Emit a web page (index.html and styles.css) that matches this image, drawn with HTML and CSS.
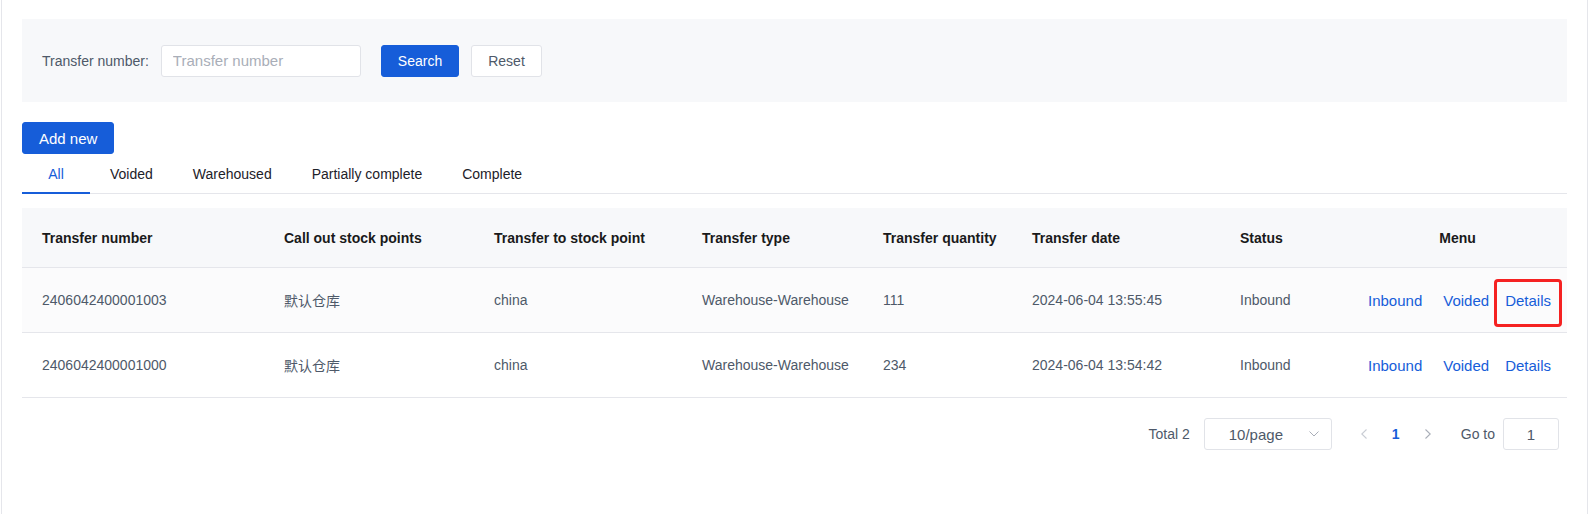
FILE: index.html
```html
<!DOCTYPE html>
<html lang="en">
<head>
<meta charset="utf-8">
<title>Transfers</title>
<link rel="stylesheet" href="styles.css">
</head>
<body>
<div class="page">
  <div class="filter">
    <label class="filter-label">Transfer number:</label>
    <input class="filter-input" type="text" placeholder="Transfer number">
    <button class="btn btn-primary btn-search">Search</button>
    <button class="btn btn-default">Reset</button>
  </div>

  <button class="btn btn-primary btn-add">Add new</button>

  <div class="tabs">
    <div class="tab tab-active">All</div>
    <div class="tab">Voided</div>
    <div class="tab">Warehoused</div>
    <div class="tab">Partially complete</div>
    <div class="tab">Complete</div>
  </div>

  <table class="grid">
    <colgroup>
      <col class="c1"><col class="c2"><col class="c3"><col class="c4"><col class="c5"><col class="c6"><col class="c7"><col class="c8">
    </colgroup>
    <thead>
      <tr>
        <th>Transfer number</th>
        <th>Call out stock points</th>
        <th>Transfer to stock point</th>
        <th>Transfer type</th>
        <th>Transfer quantity</th>
        <th>Transfer date</th>
        <th>Status</th>
        <th class="th-menu">Menu</th>
      </tr>
    </thead>
    <tbody>
      <tr class="row-hover">
        <td>2406042400001003</td>
        <td>默认仓库</td>
        <td>china</td>
        <td>Warehouse-Warehouse</td>
        <td>111</td>
        <td>2024-06-04 13:55:45</td>
        <td>Inbound</td>
        <td><div class="links"><a class="link link-in">Inbound</a><a class="link link-void">Voided</a><a class="link marked">Details</a></div></td>
      </tr>
      <tr>
        <td>2406042400001000</td>
        <td>默认仓库</td>
        <td>china</td>
        <td>Warehouse-Warehouse</td>
        <td>234</td>
        <td>2024-06-04 13:54:42</td>
        <td>Inbound</td>
        <td><div class="links"><a class="link link-in">Inbound</a><a class="link link-void">Voided</a><a class="link">Details</a></div></td>
      </tr>
    </tbody>
  </table>

  <div class="pager">
    <span class="pager-total">Total 2</span>
    <div class="pager-select">
      <span>10/page</span>
      <svg class="chev" width="10" height="6" viewBox="0 0 10 6"><polyline points="0.5,0.5 5,5 9.5,0.5" fill="none" stroke="#a9aeb8" stroke-width="1"/></svg>
    </div>
    <div class="pager-btns">
      <span class="pbtn pbtn-disabled"><svg width="6" height="10" viewBox="0 0 6 10"><polyline points="5.5,0.5 0.8,5 5.5,9.5" fill="none" stroke="#c9cdd4" stroke-width="1.1"/></svg></span>
      <span class="pbtn pbtn-current">1</span>
      <span class="pbtn"><svg width="6" height="10" viewBox="0 0 6 10"><polyline points="0.5,0.5 5.2,5 0.5,9.5" fill="none" stroke="#a9aeb8" stroke-width="1.1"/></svg></span>
    </div>
    <span class="pager-goto">Go to</span>
    <div class="pager-input">1</div>
  </div>
</div>
</body>
</html>
```

FILE: styles.css
```css
html, body {
  margin: 0;
  padding: 0;
  background: #ffffff;
}

body {
  font-family: "Liberation Sans", Arial, "Noto Sans CJK SC", sans-serif;
  font-size: 14px;
  color: #4e5969;
}

.page {
  margin: 0 1px;
  min-height: 514px;
  box-sizing: border-box;
  border-left: 1px solid #e5e6eb;
  border-right: 1px solid #e5e6eb;
  padding: 19px 20px 0;
}

/* Filter */
.filter {
  display: flex;
  align-items: center;
  height: 83px;
  box-sizing: border-box;
  padding: 0 20px;
  background: #f7f8fa;
}

.filter-label {
  font-size: 14px;
  color: #4e5969;
  margin-right: 12px;
}

.filter-input {
  width: 200px;
  height: 32px;
  box-sizing: border-box;
  border: 1px solid #e1e3e8;
  border-radius: 3px;
  background: #fff;
  padding: 0 11px;
  font-family: inherit;
  font-size: 15px;
  color: #1d2129;
  outline: none;
}

.filter-input::placeholder {
  color: #a9aeb8;
}

.btn {
  height: 32px;
  box-sizing: border-box;
  padding: 0 16px;
  border-radius: 3px;
  font-family: inherit;
  font-size: 14px;
  cursor: pointer;
}

.btn-primary {
  background: #165dd9;
  border: 1px solid #165dd9;
  color: #fff;
}

.btn-default {
  background: #fff;
  border: 1px solid #e1e3e8;
  color: #4e5969;
}

.btn-search {
  margin-left: 20px;
  margin-right: 12px;
}

.btn-add {
  display: block;
  margin-top: 20px;
  font-size: 15px;
  height: 32px;
  padding: 0 16px;
}

/* Tabs */
.tabs {
  display: flex;
  height: 39px;
  border-bottom: 1px solid #e5e6eb;
}

.tab {
  min-width: 68px;
  box-sizing: border-box;
  padding: 0 20px;
  display: flex;
  align-items: center;
  justify-content: center;
  font-size: 14px;
  color: #1d2129;
  position: relative;
}

.tab-active {
  color: #165dd9;
}

.tab-active::after {
  content: "";
  position: absolute;
  left: 0;
  right: 0;
  bottom: -1px;
  height: 2px;
  background: #165dd9;
}

/* Table */
.grid {
  width: 100%;
  margin-top: 14px;
  border-collapse: collapse;
  table-layout: fixed;
}

.c1 { width: 242px; }
.c2 { width: 210px; }
.c3 { width: 208px; }
.c4 { width: 181px; }
.c5 { width: 149px; }
.c6 { width: 208px; }
.c7 { width: 128px; }
.c8 { width: 219px; }

.grid th {
  height: 59px;
  padding: 0 20px;
  text-align: left;
  background: #f7f8fa;
  font-weight: bold;
  font-size: 14px;
  color: #1a1a1a;
  border-bottom: 1px solid #e5e6eb;
  white-space: nowrap;
}

.grid th.th-menu {
  text-align: center;
}

.grid td {
  height: 64px;
  padding: 0 20px;
  font-size: 14px;
  color: #4e5969;
  border-bottom: 1px solid #e5e6eb;
  white-space: nowrap;
}

.row-hover td {
  background: #fbfbfc;
}

.links {
  display: flex;
  align-items: center;
}

.link {
  font-size: 15px;
  color: #165dd9;
  cursor: pointer;
  text-decoration: none;
}

.link-in {
  margin-right: 21px;
}

.link-void {
  margin-right: 16px;
}

.marked {
  position: relative;
}

.marked::after {
  content: "";
  position: absolute;
  left: -11px;
  width: 68px;
  top: 50%;
  margin-top: -21px;
  height: 48px;
  box-sizing: border-box;
  border: 3px solid #f52222;
  border-radius: 4px;
}

/* Pager */
.pager {
  display: flex;
  align-items: center;
  justify-content: flex-end;
  margin-top: 20px;
  padding-right: 8px;
  height: 32px;
}

.pager-total {
  font-size: 14px;
  color: #4e5969;
  margin-right: 14px;
}

.pager-select {
  width: 128px;
  height: 32px;
  box-sizing: border-box;
  border: 1px solid #e1e3e8;
  border-radius: 3px;
  display: flex;
  align-items: center;
  padding-left: 24px;
  padding-right: 12px;
  font-size: 15px;
  color: #4e5969;
}

.pager-select span {
  flex: 1;
}

.pager-btns {
  display: flex;
  margin-left: 16px;
}

.pbtn {
  width: 32px;
  height: 32px;
  display: flex;
  align-items: center;
  justify-content: center;
  font-size: 14px;
  color: #4e5969;
}

.pbtn-current {
  color: #165dd9;
  font-weight: bold;
}

.pager-goto {
  margin-left: 17px;
  font-size: 14px;
  color: #4e5969;
}

.pager-input {
  margin-left: 8px;
  width: 56px;
  height: 32px;
  box-sizing: border-box;
  border: 1px solid #e1e3e8;
  border-radius: 3px;
  display: flex;
  align-items: center;
  justify-content: center;
  font-size: 15px;
  color: #4e5969;
}
```
